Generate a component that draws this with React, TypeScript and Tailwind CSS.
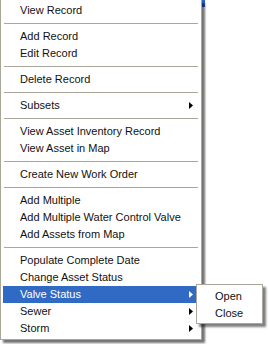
const groups: { label: string; sub?: boolean; active?: boolean }[][] = [
  [{ label: "View Record" }],
  [{ label: "Add Record" }, { label: "Edit Record" }],
  [{ label: "Delete Record" }],
  [{ label: "Subsets", sub: true }],
  [{ label: "View Asset Inventory Record" }, { label: "View Asset in Map" }],
  [{ label: "Create New Work Order" }],
  [
    { label: "Add Multiple" },
    { label: "Add Multiple Water Control Valve" },
    { label: "Add Assets from Map" },
  ],
  [
    { label: "Populate Complete Date" },
    { label: "Change Asset Status" },
    { label: "Valve Status", sub: true, active: true },
    { label: "Sewer", sub: true },
    { label: "Storm", sub: true },
  ],
];

function Arrow({ white }: { white?: boolean }) {
  return (
    <svg width="4" height="7" viewBox="0 0 4 7" className="shrink-0">
      <polygon points="0,0 4,3.5 0,7" fill={white ? "#ffffff" : "#000000"} />
    </svg>
  );
}

function Item({ label, sub, active }: { label: string; sub?: boolean; active?: boolean }) {
  return (
    <div
      className={`flex h-[17px] items-center pl-[17px] pr-[6px] leading-[17px] ${
        active ? "bg-[#316AC5] text-white" : "text-[#111]"
      }`}
    >
      <span className="flex-1 whitespace-nowrap">{label}</span>
      {sub && <Arrow white={active} />}
    </div>
  );
}

export default function App() {
  return (
    <div className="relative h-[344px] w-[269px] overflow-hidden bg-white font-['Liberation_Sans',Arial,sans-serif] text-[11px]">
      <div className="absolute left-[201px] top-0 h-[7px] w-[4px] bg-[#2F62D8]" />

      {/* main context menu */}
      <div className="relative w-[202px] border-x border-b border-[#ACA899] bg-white px-[2px] pb-[2px] pt-[2px] shadow-[3px_3px_2px_rgba(0,0,0,0.55)]">
        {groups.map((group, gi) => (
          <div key={gi}>
            {gi > 0 && (
              <div className="flex h-[9px] items-center px-[1px]">
                <div className="h-px w-full bg-[#ACA899]" />
              </div>
            )}
            {group.map((it) => (
              <Item key={it.label} {...it} />
            ))}
          </div>
        ))}
      </div>

      {/* Valve Status submenu */}
      <div className="absolute left-[196px] top-[284px] w-[67px] border border-[#ACA899] bg-white px-[2px] pb-[1px] pt-[3px] text-[#111] shadow-[3px_3px_2px_rgba(0,0,0,0.5)]">
        <div className="flex h-[17px] items-center pl-[16px] leading-[17px]">Open</div>
        <div className="flex h-[17px] items-center pl-[16px] leading-[17px]">Close</div>
      </div>
    </div>
  );
}
